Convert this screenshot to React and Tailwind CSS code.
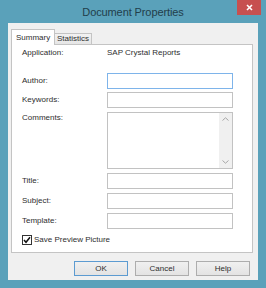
import React from 'react';

const Field = ({ label, focused, className = '' }) => (
  <div className={`flex items-center ${className}`}>
    <span className="w-[85px] leading-[10px]">{label}</span>
    <div className={`w-[126px] h-[16px] bg-white border ${focused ? 'border-[#7eb4ea]' : 'border-[#c2c2c2]'}`} />
  </div>
);

const Button = ({ children, primary }) => (
  <button className={`w-[54px] h-[15px] flex items-center justify-center leading-none bg-gradient-to-b from-[#f0f0f0] to-[#e3e3e3] border ${primary ? 'border-[#5c9bd1]' : 'border-[#adadad]'}`}>
    {children}
  </button>
);

const App = () => {
  return (
    <div className="w-[266px] h-[288px] bg-[#5aa1ba] flex flex-col font-['Liberation_Sans',Arial,sans-serif] text-[8px] text-[#2e2e2e]">
      {/* title bar */}
      <div className="relative h-[23px] flex items-center justify-center">
        <span className="text-[11px] text-[#223e4a] tracking-[-0.1px] pt-[1px]">Document Properties</span>
        <button className="absolute right-[5px] top-0 w-[24px] h-[15px] bg-[#c75050] flex items-center justify-center">
          <svg width="7" height="7" viewBox="0 0 7 7">
            <path d="M1 1 L6 6 M6 1 L1 6" stroke="white" strokeWidth="1.6" />
          </svg>
        </button>
      </div>

      <div className="mx-[8px] h-[257px] bg-[#f0f0f0] flex flex-col px-[3px] pt-[6px]">
        {/* tabs */}
        <div className="flex items-end h-[15px]">
          <div className="relative z-10 -mb-px w-[44px] h-[16px] bg-white border border-b-0 border-[#c4c4c4] flex items-start pt-[3px] pl-[4px] leading-[10px]">
            Summary
          </div>
          <div className="w-[37px] h-[11px] bg-gradient-to-b from-[#f2f2f2] to-[#e6e6e6] border border-l-0 border-b-0 border-[#c4c4c4] flex items-center pl-[2px] leading-[10px]">
            Statistics
          </div>
        </div>

        {/* panel */}
        <div className="w-[242px] h-[209px] bg-white border border-[#c4c4c4] pl-[10px] pt-[3px] flex flex-col">
          <div className="flex leading-[10px]">
            <span className="w-[85px]">Application:</span>
            <span>SAP Crystal Reports</span>
          </div>
          <Field label="Author:" focused className="mt-[15px]" />
          <Field label="Keywords:" className="mt-[3px]" />
          <div className="flex mt-[4px]">
            <span className="w-[85px] leading-[10px] pt-[1px]">Comments:</span>
            <div className="w-[126px] h-[57px] bg-white border border-[#c2c2c2] flex justify-end">
              <div className="w-[13px] h-full bg-[#f0f0f0] flex flex-col items-center justify-between py-[4px]">
                <svg width="7" height="4" viewBox="0 0 7 4">
                  <path d="M0.5 3.5 L3.5 0.8 L6.5 3.5" stroke="#a6a6a6" strokeWidth="1" fill="none" />
                </svg>
                <svg width="7" height="4" viewBox="0 0 7 4">
                  <path d="M0.5 0.5 L3.5 3.2 L6.5 0.5" stroke="#a6a6a6" strokeWidth="1" fill="none" />
                </svg>
              </div>
            </div>
          </div>
          <Field label="Title:" className="mt-[4px]" />
          <Field label="Subject:" className="mt-[4px]" />
          <Field label="Template:" className="mt-[4px]" />
          <div className="flex items-center mt-[6px]">
            <div className="w-[10px] h-[10px] border border-[#333] bg-white flex items-center justify-center">
              <svg width="8" height="8" viewBox="0 0 8 8">
                <path d="M1 4 L3 6.3 L7 1.2" stroke="#111" strokeWidth="1.5" fill="none" />
              </svg>
            </div>
            <span className="ml-[2px] leading-[10px]">Save Preview Picture</span>
          </div>
        </div>

        {/* buttons */}
        <div className="mt-[8px] flex justify-end gap-[7px] pr-[5px]">
          <Button primary>OK</Button>
          <Button>Cancel</Button>
          <Button>Help</Button>
        </div>
      </div>
    </div>
  );
};

export default App;
